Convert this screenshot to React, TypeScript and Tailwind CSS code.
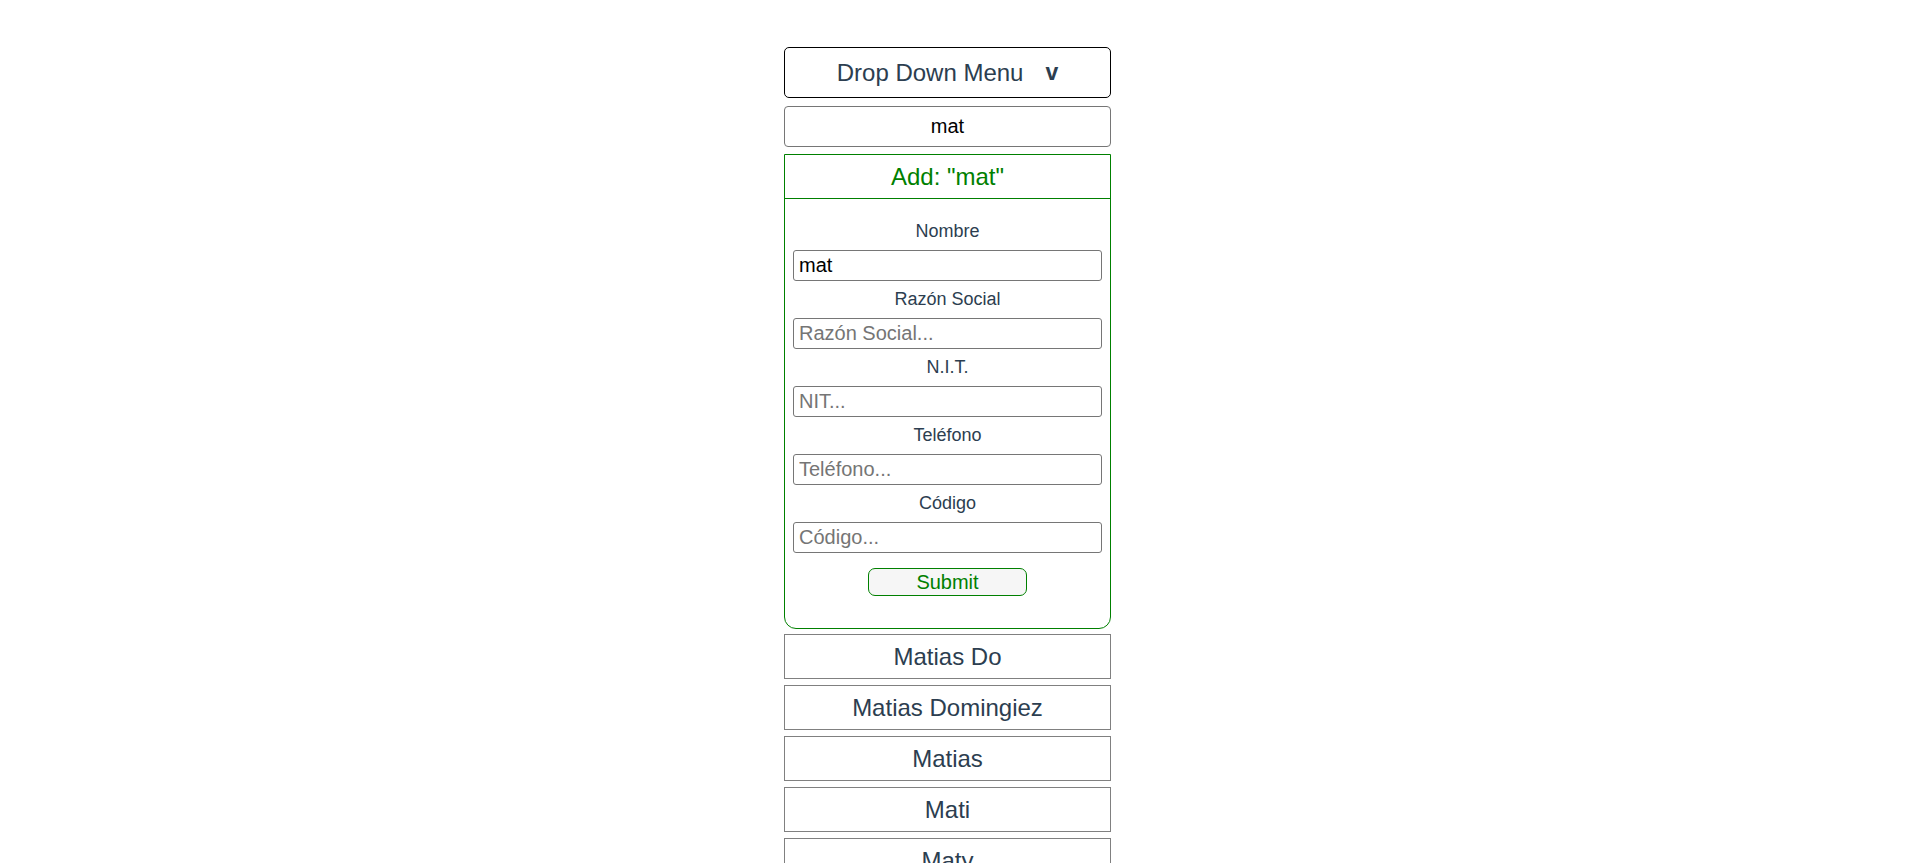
import React from "react";

const fields = [
  { label: "Nombre", placeholder: "Nombre...", value: "mat" },
  { label: "Razón Social", placeholder: "Razón Social...", value: "" },
  { label: "N.I.T.", placeholder: "NIT...", value: "" },
  { label: "Teléfono", placeholder: "Teléfono...", value: "" },
  { label: "Código", placeholder: "Código...", value: "" },
];

const items = ["Matias Do", "Matias Domingiez", "Matias", "Mati", "Maty"];

export default function App() {
  return (
    <div
      className="min-h-[941px] bg-white pt-[47px] pb-[50px] text-[#2c3e50]"
      style={{ fontFamily: '"Liberation Sans", Arial, Helvetica, sans-serif' }}
    >
      <div className="ml-[784px] flex w-[327px] flex-col">
        <div className="flex h-[51px] items-center justify-center rounded-[5px] border border-black text-[24px]">
          <span>Drop Down Menu</span>
          <span className="ml-[22px] text-[23px] font-bold">v</span>
        </div>

        <input
          className="mt-[8px] h-[41px] rounded-[4px] border border-[#767676] text-center text-[20px] text-black outline-none"
          defaultValue="mat"
        />

        <div className="mt-[7px] flex flex-col rounded-b-[12px] border border-[#008000]">
          <div className="flex h-[44px] items-center justify-center border-b border-[#008000] text-[24px] text-[#008000]">
            Add: "mat"
          </div>
          <div className="flex flex-col px-[8px] pt-[14px] pb-[32px]">
            {fields.map((f) => (
              <div key={f.label} className="flex flex-col">
                <div className="flex h-[37px] items-center justify-center text-[18px]">
                  {f.label}
                </div>
                <input
                  className="h-[31px] rounded-[3px] border border-[#767676] px-[5px] text-[20px] text-black outline-none placeholder:text-[#757575]"
                  placeholder={f.placeholder}
                  defaultValue={f.value}
                />
              </div>
            ))}
            <div className="mt-[15px] flex justify-center">
              <button className="h-[28px] w-[159px] rounded-[7px] border border-[#008000] bg-[#f6f6f6] text-[20px] leading-none text-[#008000]">
                Submit
              </button>
            </div>
          </div>
        </div>

        <div className="mt-[5px] flex flex-col gap-[6px]">
          {items.map((it) => (
            <div
              key={it}
              className="flex h-[45px] items-center justify-center border border-[#808080] text-[24px]"
            >
              {it}
            </div>
          ))}
        </div>
      </div>
    </div>
  );
}
